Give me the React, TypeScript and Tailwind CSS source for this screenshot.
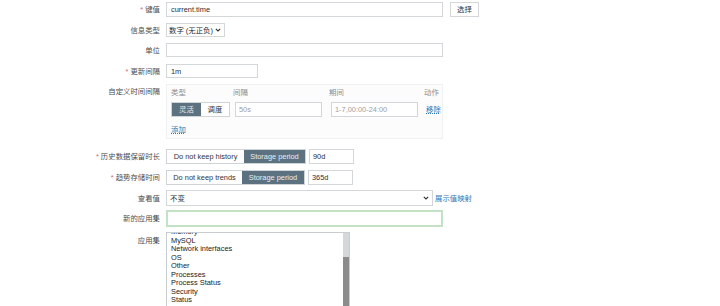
export default function App() {
  const Label = ({ children, req }: { children: React.ReactNode; req?: boolean }) => (
    <div className="w-[160px] shrink-0 text-right text-[#4d4d4d] whitespace-nowrap">
      {req && <span className="text-[#c96a6a]">* </span>}
      {children}
    </div>
  );

  const apps = ['Memory', 'MySQL', 'Network interfaces', 'OS', 'Other', 'Processes', 'Process Status', 'Security', 'Status'];

  return (
    <div
      className="w-[720px] h-[306px] overflow-hidden bg-white text-[7.4px] leading-[9px] text-[#1f2c33] flex flex-col"
      style={{ fontFamily: '"Liberation Sans", "Noto Sans CJK SC", sans-serif' }}
    >
      {/* 键值 */}
      <div className="flex items-center gap-[6px] mt-[2px] h-[15px]">
        <Label req>键值</Label>
        <div className="w-[277px] h-[15px] border border-[#d3d7da] flex items-center px-[4px]">current.time</div>
        <div className="ml-[1px] w-[29px] h-[15px] border border-[#d3d7da] flex items-center justify-center text-[#333]">选择</div>
      </div>

      {/* 信息类型 */}
      <div className="flex items-center gap-[6px] mt-[6px] h-[14px]">
        <Label>信息类型</Label>
        <div className="w-[59px] h-[14px] border border-[#d3d7da] flex items-center pl-[2px] gap-[2px] whitespace-nowrap">
          <span>数字 (无正负)</span>
          <svg width="6" height="4" viewBox="0 0 6 4" className="shrink-0"><path d="M0.8 0.8 L3 3 L5.2 0.8" fill="none" stroke="#333" strokeWidth="1.1" /></svg>
        </div>
      </div>

      {/* 单位 */}
      <div className="flex items-center gap-[6px] mt-[6px] h-[14px]">
        <Label>单位</Label>
        <div className="w-[277px] h-[14px] border border-[#d3d7da]" />
      </div>

      {/* 更新间隔 */}
      <div className="flex items-center gap-[6px] mt-[7px] h-[14px]">
        <Label req>更新间隔</Label>
        <div className="w-[92px] h-[14px] border border-[#d3d7da] flex items-center px-[4px]">1m</div>
      </div>

      {/* 自定义时间间隔 */}
      <div className="flex items-start gap-[6px] mt-[6px]">
        <div className="pt-[3px]">
          <Label>自定义时间间隔</Label>
        </div>
        <div className="w-[277px] h-[55px] border border-[#f0f1f2] bg-[#fcfcfc] pl-[4px] pt-[3px] flex flex-col">
          <div className="flex text-[#8c8c8c] h-[9px] items-center">
            <span className="w-[62px]">类型</span>
            <span className="w-[96px]">间隔</span>
            <span className="w-[95px]">期间</span>
            <span>动作</span>
          </div>
          <div className="flex items-center mt-[5px] h-[15px]">
            <div className="flex h-[15px] border border-[#cfd4d7]">
              <div className="w-[29px] bg-[#5d7280] text-[#e8eef1] flex items-center justify-center">灵活</div>
              <div className="w-[28px] bg-white text-[#333] flex items-center justify-center">调度</div>
            </div>
            <div className="ml-[5px] w-[87px] h-[15px] border border-[#d3d7da] bg-white flex items-center px-[3px] text-[#a0a0a0]">50s</div>
            <div className="ml-[9px] w-[87px] h-[15px] border border-[#d3d7da] bg-white flex items-center px-[3px] text-[#a0a0a0]">1-7,00:00-24:00</div>
            <span className="ml-[8px] text-[#2f76b3] underline decoration-dotted">移除</span>
          </div>
          <span className="mt-[8px] text-[#2f76b3] underline decoration-dotted self-start">添加</span>
        </div>
      </div>

      {/* 历史数据保留时长 */}
      <div className="flex items-center gap-[6px] mt-[10px] h-[15px]">
        <Label req>历史数据保留时长</Label>
        <div className="flex h-[15px] border border-[#cfd4d7]">
          <div className="w-[77px] bg-white text-[#333] flex items-center justify-center">Do not keep history</div>
          <div className="w-[61px] bg-[#5d7280] text-[#e8eef1] flex items-center justify-center">Storage period</div>
        </div>
        <div className="-ml-[3px] w-[45px] h-[15px] border border-[#d3d7da] flex items-center px-[3px]">90d</div>
      </div>

      {/* 趋势存储时间 */}
      <div className="flex items-center gap-[6px] mt-[6px] h-[15px]">
        <Label req>趋势存储时间</Label>
        <div className="flex h-[15px] border border-[#cfd4d7]">
          <div className="w-[75px] bg-white text-[#333] flex items-center justify-center">Do not keep trends</div>
          <div className="w-[62px] bg-[#5d7280] text-[#e8eef1] flex items-center justify-center">Storage period</div>
        </div>
        <div className="-ml-[3px] w-[45px] h-[15px] border border-[#d3d7da] flex items-center px-[3px]">365d</div>
      </div>

      {/* 查看值 */}
      <div className="flex items-center gap-[6px] mt-[5px] h-[16px]">
        <Label>查看值</Label>
        <div className="w-[267px] h-[16px] border border-[#d3d7da] flex items-center justify-between px-[3px]">
          <span>不变</span>
          <svg width="6" height="4" viewBox="0 0 6 4"><path d="M0.8 0.8 L3 3 L5.2 0.8" fill="none" stroke="#333" strokeWidth="1.1" /></svg>
        </div>
        <span className="-ml-[4px] text-[#2f76b3]">展示值映射</span>
      </div>

      {/* 新的应用集 */}
      <div className="flex items-center gap-[6px] mt-[4px] h-[17px]">
        <Label>新的应用集</Label>
        <div className="w-[277px] h-[17px] border-2 border-[#c3e2c5]" />
      </div>

      {/* 应用集 */}
      <div className="flex items-start gap-[6px] mt-[5px] flex-1 min-h-0">
        <div className="pt-[4px]">
          <Label>应用集</Label>
        </div>
        <div className="w-[184px] h-[90px] border border-[#c9cdd0] flex overflow-hidden">
          <div className="flex-1 pl-[4px] -mt-[5px] flex flex-col leading-[8.5px] text-[#222]">
            {apps.map((a) => (
              <span key={a}>{a}</span>
            ))}
          </div>
          <div className="w-[6px] flex flex-col">
            <div className="h-[24px] bg-[#d4d8da]" />
            <div className="flex-1 bg-[#8c8c8c]" />
          </div>
        </div>
      </div>
    </div>
  );
}
